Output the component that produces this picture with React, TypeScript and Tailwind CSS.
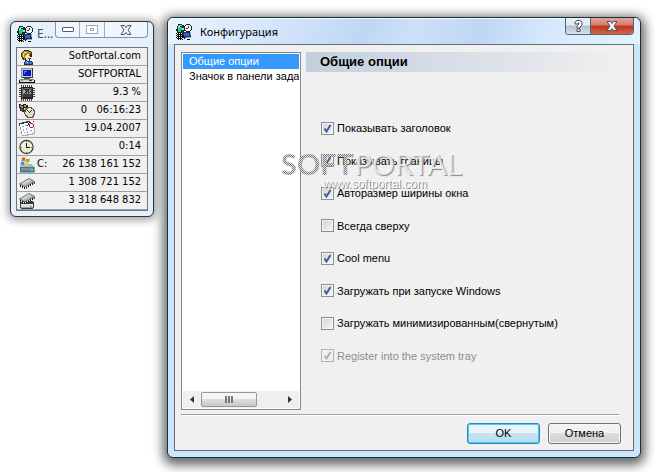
import { useState } from 'react';
import type { ReactNode } from 'react';

function Svg({ children }: { children: ReactNode }) {
  return (
    <svg viewBox="0 0 16 16" className="h-4 w-4 shrink-0" shapeRendering="crispEdges" aria-hidden="true">
      {children}
    </svg>
  );
}

function AppIcon() {
  return (
    <Svg>
      <path d="M2 0h4v1h2v2h2v4H8v2H1V2h1z" fill="#103020" />
      <path d="M2 2h2v1h2v3H5v2H2z" fill="#25c890" />
      <path d="M3 1h3v1H4v2H2V2h1zM6 4h2v2H6z" fill="#8ee8dc" />
      <path d="M1 7h1v1H1zM3 8h1v1H3zM0 5h1v2H0z" fill="#000" />
      <path d="M10 0h4v1h1v1h1v4h-1v1h-1v1h-4V7H9V6H8V2h1V1h1z" fill="#222" />
      <path d="M10 1h4v1h1v4h-1v1h-4V6H9V2h1z" fill="#eef2f2" />
      <path d="M12 2h1v2h-1v1h-2V4h2z" fill="#333" />
      <path d="M7 8h8v6H7z" fill="#24344c" />
      <path d="M8 9h5v3H8z" fill="#2862d8" />
      <path d="M10 13h5v1h-5zM14 8h1v3h-1z" fill="#9aa7b8" />
      <path d="M0 9h1v1H0zM2 9h1v1H2zM4 9h1v1H4zM6 9h1v1H6zM1 10h6v1H1zM0 11h1v1H0zM2 11h1v1H2zM4 11h1v1H4zM6 11h1v1H6zM1 12h7v1H1zM0 13h1v1H0zM2 13h1v1H2zM4 13h1v1H4zM6 13h1v1H6zM8 14h1v1H8zM1 14h5v1H1zM2 15h1v1H2zM4 15h1v1H4zM6 15h1v1H6zM11 15h3v1h-3z" fill="#000" />
    </Svg>
  );
}

function UserIcon() {
  return (
    <Svg>
      <path d="M5 1h5v1h2v1h1v5h-1v2h-1v2h2v1h1v3H5v-3h1v-2H4v-1H3V8H2V4h1V3h1V2h1z" fill="#2f2a10" />
      <path d="M5 2h5v1h2v2h-1v1h-1V5H8v1H7v2H6v3H5V9H4V8H3V4h1V3h1z" fill="#a58a1c" />
      <path d="M5 3h3v1H6v1H5v3H4V4h1z" fill="#e8d468" />
      <path d="M8 5h2v1h1v2h1v1h-1v1h-1v2H8v-1H7V9H6V7h1V6h1z" fill="#f8dcc0" />
      <path d="M10 6h1v1h-1zM9 9h2v1H9z" fill="#9c4c20" />
      <path d="M7 12h2v1h2v-1h1v1h1v2H6v-2h1z" fill="#2e6ff0" />
      <path d="M7 13h2v1H7z" fill="#8fd6ff" />
    </Svg>
  );
}

function ComputerIcon() {
  return (
    <Svg>
      <path d="M2 1h12v10H2z" fill="#c8cbd0" />
      <path d="M2 1h12v1H3v9H2z" fill="#8c9098" />
      <path d="M13 1h1v10H3v-1h10z" fill="#333a4a" />
      <path d="M4 3h8v6H4z" fill="#0716c8" />
      <path d="M5 4h3v1H6v2H5z" fill="#3c8cff" />
      <path d="M5 11h6v1H5z" fill="#555" />
      <path d="M1 12h14v3H1z" fill="#d4d6dc" />
      <path d="M1 12h14v1H1z" fill="#7c828c" />
      <path d="M0 13h1v2h14v-2h1v3H0z" fill="#111" />
      <path d="M10 13h3v1h-3z" fill="#333" />
      <path d="M2 13h2v1H2z" fill="#38c060" />
    </Svg>
  );
}

function CpuIcon() {
  return (
    <Svg>
      <path d="M2 2h12v12H2z" fill="#222" />
      <path d="M2 0h1v2H2zM4 0h1v2H4zM6 0h1v2H6zM8 0h1v2H8zM10 0h1v2h-1zM12 0h1v2h-1zM2 14h1v2H2zM4 14h1v2H4zM6 14h1v2H6zM8 14h1v2H8zM10 14h1v2h-1zM12 14h1v2h-1zM0 3h2v1H0zM0 5h2v1H0zM0 7h2v1H0zM0 9h2v1H0zM0 11h2v1H0zM14 3h2v1h-2zM14 5h2v1h-2zM14 7h2v1h-2zM14 9h2v1h-2zM14 11h2v1h-2z" fill="#444" />
      <path d="M3 3h10v1H4v9H3z" fill="#666" />
      <path d="M4 4h9v8H4z" fill="#3a3a3a" />
      <path d="M4 5h2v1h1v1H6v1h1v1H6V8H5v1H4zM8 7h1v2H8zM10 5h2v1h-1v1h1v2h-2V8h1V7h-1z" fill="#a8a8a8" />
    </Svg>
  );
}

function UptimeIcon() {
  return (
    <Svg>
      <path d="M0 1h2v1h2V1h3v1h2v7H6V9H3V8H1V5H0z" fill="#222" />
      <path d="M1 2h1v1h2v2H2V4H1z" fill="#f06424" />
      <path d="M5 2h2v2H5z" fill="#63bd38" />
      <path d="M2 6h2v2H3V7H2z" fill="#2e70e8" />
      <path d="M5 5h2v2H5z" fill="#f3c72c" />
      <path d="M8 4h5v1h1v1h1v1h1v5h-1v2h-1v1H8v-1H7v-1H6v-2H5V8h1V6h1V5h1z" fill="#5a574a" />
      <path d="M9 5h3v1h2v2h1v3h-1v2h-1v1H9v-1H8v-1H7v-1H6V9h1V7h1V6h1z" fill="#e0dcc8" />
      <path d="M9 6h3v1H9v2H8V7h1z" fill="#fffef7" />
      <path d="M8 7h1v1h1v1h1V8h1V7h1v1h-1v1h-1v1h-1V9H9V8H8z" fill="#332f24" />
    </Svg>
  );
}

function CalendarIcon() {
  return (
    <Svg>
      <path d="M1 2h3V1h5V0h5v11h-1v2H8v1H4v1H3v-3H2V8H1z" fill="#fdfdff" />
      <path d="M0 2h3V1h4V0h4v1H9v1H5v1H0zM0 3h1v2H0z" fill="#333846" />
      <path d="M1 6h1v3H1zM2 10h1v3H2zM3 14h1v1H3z" fill="#9096a4" />
      <path d="M4 14h4v-1h5v-1h2V6h1v7h-2v1H9v1H4z" fill="#a8acb4" />
      <path d="M3 5h2v1H3zM6 4h2v1H6zM4 8h1v2H4zM7 7h1v2H7zM5 11h1v1H5zM8 10h1v2H8zM11 9h2v1h-2z" fill="#8fa1cc" />
      <path d="M11 2h3v1h1v3h-1v1h-3V6h-1V3h1z" fill="#b32650" />
      <path d="M11 3h3v3h-3z" fill="#fff" />
      <path d="M10 1h2v1h-2zM9 2h1v2H9zM8 4h1v1H8zM14 0h1v1h-1z" fill="#20242c" />
    </Svg>
  );
}

function ClockIcon() {
  return (
    <Svg>
      <g shapeRendering="auto">
        <circle cx="7.5" cy="8" r="6.6" fill="#eeebd6" stroke="#3d3a2f" strokeWidth="1.2" />
        <path d="M3 9a5 5 0 0 1 5-5.500" fill="none" stroke="#fffef8" />
      </g>
      <path d="M7 4h1v4h3v1H7z" fill="#222" />
      <path d="M7 2h1v1H7zM7 13h1v1H7zM2 8h1v1H2zM12 8h1v1h-1z" fill="#77725c" />
    </Svg>
  );
}

function DriveIcon() {
  return (
    <Svg>
      <g shapeRendering="auto">
        <path d="M1 9.500 3.500 7h9L15.500 10v5h-14z" fill="#a8b6be" />
        <path d="M1 10h14.500v5.500H1z" fill="#4a7485" />
        <path d="M2 11h12v2.500H2z" fill="#7197a6" />
        <path d="M12 12h2v2h-2z" fill="#35d3e6" />
        <path d="M3 1q2-1.500 3.500 0L5.800 4.200q-2-1-3.500 0z" fill="#ee5a25" />
        <path d="M7.200 1.500q2 1.200 3.800 0L10 5q-1.800 1-3.500-.2z" fill="#79b83d" />
        <path d="M2.200 5q1.700-1 3.400 0L4.800 8.200q-1.700-.9-3.400 0z" fill="#3b8ee0" />
        <path d="M6.300 5.700q1.700 1 3.500 0L9 9q-1.900 1-3.500-.2z" fill="#f9c22e" />
      </g>
    </Svg>
  );
}

function MemoryIcon({ stacked }: { stacked?: boolean }) {
  return (
    <Svg>
      {stacked && (
        <g>
          <path d="M2 8h12v1h1v6h-1v1H2v-1H1V9h1z" fill="#3a3d3f" />
          <path d="M2 11h12v4H2z" fill="#dfe2e2" />
          <path d="M2 14h12v1H2z" fill="#9aa0a0" />
          <path d="M11 13h2v1h-2z" fill="#35cc52" />
        </g>
      )}
      <g shapeRendering="auto" transform={stacked ? 'translate(0 -3)' : undefined}>
        <path d="M.5 9 10 3.500 15.500 6.500 6 12z" fill="#b4b7ae" stroke="#55574f" strokeWidth=".8" />
        <path d="M2.500 8.500 10 4.300l2 1-7.500 4.200z" fill="#d8dbd2" />
        <path d="M1.500 10v2M3.500 11v2M5.500 12v2M7.500 11.500v2M9.500 10.300v2M11.500 9v2M13.500 8v2M15.200 7v2" stroke="#1c1c1c" fill="none" />
        <path d="M2.500 11v1M4.500 12v1M6.500 12v1M8.500 11v1M10.500 10v1M12.500 9v1" stroke="#f8f8f8" fill="none" />
      </g>
    </Svg>
  );
}

const stats = [
  { icon: <UserIcon />, value: 'SoftPortal.com' },
  { icon: <ComputerIcon />, value: 'SOFTPORTAL' },
  { icon: <CpuIcon />, value: '9.3 %' },
  { icon: <UptimeIcon />, value: '0\u00a0\u00a0 06:16:23' },
  { icon: <CalendarIcon />, value: '19.04.2007' },
  { icon: <ClockIcon />, value: '0:14' },
  { icon: <DriveIcon />, label: 'C:', value: '26 138 161 152' },
  { icon: <MemoryIcon />, value: '1 308 721 152' },
  { icon: <MemoryIcon stacked />, value: '3 318 648 832' },
];

const initialOptions = [
  { id: 'title', label: 'Показывать заголовок', checked: true },
  { id: 'borders', label: 'Показывать границы', checked: true },
  { id: 'autosize', label: 'Авторазмер ширины окна', checked: true },
  { id: 'ontop', label: 'Всегда сверху', checked: false },
  { id: 'coolmenu', label: 'Cool menu', checked: true },
  { id: 'autorun', label: 'Загружать при запуске Windows', checked: true },
  { id: 'minimized', label: 'Загружать минимизированным(свернутым)', checked: false },
  { id: 'tray', label: 'Register into the system tray', checked: true, disabled: true },
];

const pages = ['Общие опции', 'Значок в панели зада'];

function CloseGlyph({ className }: { className: string }) {
  return (
    <svg viewBox="0 0 12 10" className={className} aria-hidden="true">
      <path d="M1 .5h3.500L6 2.500 7.500.5H11L8 5l3 4.500H7.500L6 7.500 4.500 9.500H1L4 5z" fill="#f8f8f8" stroke="#4b505c" />
    </svg>
  );
}

function StatsWindow() {
  return (
    <section className="mt-1 w-36 shrink-0 rounded-md border border-[#30363c] bg-[#e4f0fc] px-[5px] pb-[5px] shadow-[0_1px_8px_2px_rgba(0,0,0,0.4)]">
      <header className="flex h-[25px] items-start justify-between">
        <div className="flex items-center gap-1 pt-1 pl-px">
          <AppIcon />
          <span className="font-['Noto_Sans',sans-serif] text-xs leading-4 text-[#3c5066]">E...</span>
        </div>
        <div className="flex h-4 rounded-b-[4px] border border-t-0 border-[#8a929c] bg-[#f0f6fd]">
          <button aria-label="Свернуть" className="flex w-6 items-center justify-center border-r border-[#a4adb8]">
            <span className="h-[5px] w-3 rounded-[1px] border border-[#555a64] bg-white" />
          </button>
          <button aria-label="Развернуть" className="flex w-[25px] items-center justify-center border-r border-[#a4adb8]">
            <span className="flex h-[9px] w-3 items-center justify-center border border-[#a2a8b6] bg-white">
              <span className="h-[3px] w-1 border border-[#a2a8b6]" />
            </span>
          </button>
          <button aria-label="Закрыть" className="flex w-[42px] items-center justify-center">
            <CloseGlyph className="h-[10px] w-3" />
          </button>
        </div>
      </header>
      <dl className="border border-[#6e747c] bg-[#f0f0f0] font-['DejaVu_Sans_Condensed','DejaVu_Sans',sans-serif] text-[11px] text-black">
        {stats.map((s, i) => (
          <div key={i} className="flex h-[18px] items-center border-b border-[#a0a0a0] pr-1.5 pl-0.5">
            <dt className="flex items-center gap-0.5">{s.icon}{s.label}</dt>
            <dd className="ml-auto whitespace-nowrap">{s.value}</dd>
          </div>
        ))}
      </dl>
    </section>
  );
}

function ConfigWindow() {
  const [page, setPage] = useState(0);
  const [options, setOptions] = useState(initialOptions);

  const toggle = (id: string) => {
    setOptions(prev => prev.map(o => (o.id === id ? { ...o, checked: !o.checked } : o)));
  };

  return (
    <section className="min-w-0 flex-1 rounded-md border border-[#17323c] bg-[#cfe3fa] px-1.5 pb-1.5 shadow-[inset_0_0_0_1px_#b9f2ff,0_3px_11px_4px_rgba(0,0,0,0.6)]">
      <header className="-mx-1.5 flex h-[26px] items-start justify-between rounded-t-md bg-[linear-gradient(115deg,#e9f4ff_0%,#d5e6fb_22%,#bfd7f3_42%,#cde0f8_52%,#bfd6f4_66%,#d6e9fc_80%,#e2f2ff_100%)] px-1.5 shadow-[inset_1px_1px_0_#f4fcff]">
        <div className="flex items-center gap-2 pt-1.5 pl-0.5">
          <AppIcon />
          <h1 className="font-['Noto_Sans',sans-serif] text-[11px] leading-4 text-black">Конфигурация</h1>
        </div>
        <div className="flex h-[17px] overflow-hidden rounded-b-[4px] border border-t-0 border-[#5c6470]">
          <button aria-label="Справка" className="flex w-[25px] items-center justify-center border-r border-[#5c6470] bg-[linear-gradient(#e5ecf4_45%,#b3bfce_50%,#d3e2f0)]">
            <svg viewBox="0 0 9 12" className="h-3 w-[9px]" aria-hidden="true">
              <path d="M1 4V2l2-1.500h3L8 2v3L6 7v1H3V6l2-2V3H4v1zM3 9h3v2.500H3z" fill="#fff" stroke="#4b505c" />
            </svg>
          </button>
          <button aria-label="Закрыть" className="flex w-[42px] items-center justify-center bg-[linear-gradient(#e8a598_0%,#d5796a_45%,#b93520_50%,#d4634a_100%)]">
            <CloseGlyph className="h-[10px] w-3" />
          </button>
        </div>
      </header>

      <div className="border border-[#666e76] bg-[#f0f0f0] px-1.5 pt-[7px] pb-1.5 font-['Liberation_Sans',sans-serif] text-[11px] text-black">
        <div className="flex gap-[5px]">
          <div className="flex h-[358px] w-[120px] shrink-0 flex-col border border-[#828790] bg-white p-px">
            <ul className="flex-1 overflow-hidden">
              {pages.map((p, i) => (
                <li key={p}>
                  <button
                    onClick={() => setPage(i)}
                    className={`block h-[15px] w-full overflow-hidden pl-1.5 text-left leading-[15px] whitespace-nowrap ${i === page ? 'bg-[#3399ff] text-white' : ''}`}
                  >
                    {p}
                  </button>
                </li>
              ))}
            </ul>
            <div className="flex h-[17px] items-center bg-[#efefef]">
              <button aria-label="Влево" className="flex w-[18px] justify-center">
                <svg viewBox="0 0 4 7" className="h-[7px] w-1" aria-hidden="true"><path d="M4 0v7L0 3.500z" fill="#333" /></svg>
              </button>
              <div className="flex h-[15px] w-14 items-center justify-center gap-px rounded-xs border border-[#979797] bg-[linear-gradient(#f4f4f4_45%,#dcdcdc_50%,#cacaca)]">
                <span className="h-[7px] w-0.5 bg-[#777]" />
                <span className="h-[7px] w-0.5 bg-[#777]" />
                <span className="h-[7px] w-0.5 bg-[#777]" />
              </div>
              <button aria-label="Вправо" className="ml-auto flex w-[18px] justify-center">
                <svg viewBox="0 0 4 7" className="h-[7px] w-1" aria-hidden="true"><path d="M0 0v7l4-3.500z" fill="#333" /></svg>
              </button>
            </div>
          </div>

          <div className="min-w-0 flex-1">
            <h2 className="h-5 bg-linear-to-r from-[#c3cfdd] to-[#f0f0f0] pl-3.5 text-[13px] leading-5 font-bold">
              {pages[page]}
            </h2>
            <div className="mt-10 grid h-[260px] auto-rows-fr pl-[15px]">
              {options.map(o => (
                <label key={o.id} className={`flex items-center gap-[3px] whitespace-nowrap ${o.disabled ? 'text-[#8d8d8d]' : ''}`}>
                  <span className="relative h-[13px] w-[13px] shrink-0">
                    <input
                      type="checkbox"
                      checked={o.checked}
                      disabled={o.disabled}
                      onChange={() => toggle(o.id)}
                      className="peer block h-[13px] w-[13px] appearance-none border border-[#8e8f8f] bg-[linear-gradient(135deg,#cfd3d8,#f6f6f6)] shadow-[inset_0_0_0_1px_#f4f4f4] disabled:border-[#b1b1b1] disabled:bg-none"
                    />
                    <svg viewBox="0 0 13 13" className="pointer-events-none absolute inset-0 hidden h-[13px] w-[13px] text-[#3f5c9c] peer-checked:block peer-disabled:text-[#b0b0b0]" aria-hidden="true">
                      <path d="M3.500 6.500 5.500 9.500 9.500 3" fill="none" stroke="currentColor" strokeWidth="2" />
                    </svg>
                  </span>
                  {o.label}
                </label>
              ))}
            </div>
          </div>
        </div>

        <div className="mt-1 mr-2 border-t border-[#a0a0a0] border-b border-b-white" />
        <div className="mt-[7px] mr-1.5 flex justify-end gap-2">
          <button className="h-[21px] w-[73px] rounded-[3px] border border-[#3c7fb1] bg-[linear-gradient(#eaf5fb_45%,#c6e4f3_50%,#b3dcf0)] shadow-[inset_0_0_0_1px_#3fd0f8]">OK</button>
          <button className="h-[21px] w-[73px] rounded-[3px] border border-[#707070] bg-[linear-gradient(#f2f2f2_45%,#dddddd_50%,#cfcfcf)] shadow-[inset_0_0_0_1px_#f8f8f8]">Отмена</button>
        </div>
      </div>
    </section>
  );
}

function Watermark() {
  return (
    <div className="pointer-events-none absolute top-[146px] left-[281px] font-['Lato',sans-serif]" aria-hidden="true">
      <div className="flex text-[29px] leading-9">
        <span className="bg-[repeating-conic-gradient(#777_0_25%,#e4e4e4_0_50%)] bg-size-[2px_2px] bg-clip-text font-bold text-transparent">SOFT</span>
        <span className="text-white/75 [text-shadow:1px_1px_1px_#888]">PORTAL</span>
      </div>
      <div className="-mt-1 pl-[42px] font-['Liberation_Sans',sans-serif] text-xs leading-3 text-white/80 [text-shadow:1px_1px_0_#888]">www.softportal.com</div>
    </div>
  );
}

export default function App() {
  return (
    <main className="relative flex min-h-screen items-start gap-[13px] overflow-hidden bg-white pt-[17px] pr-3.5 pb-3.5 pl-2.5">
      <StatsWindow />
      <ConfigWindow />
      <Watermark />
    </main>
  );
}
